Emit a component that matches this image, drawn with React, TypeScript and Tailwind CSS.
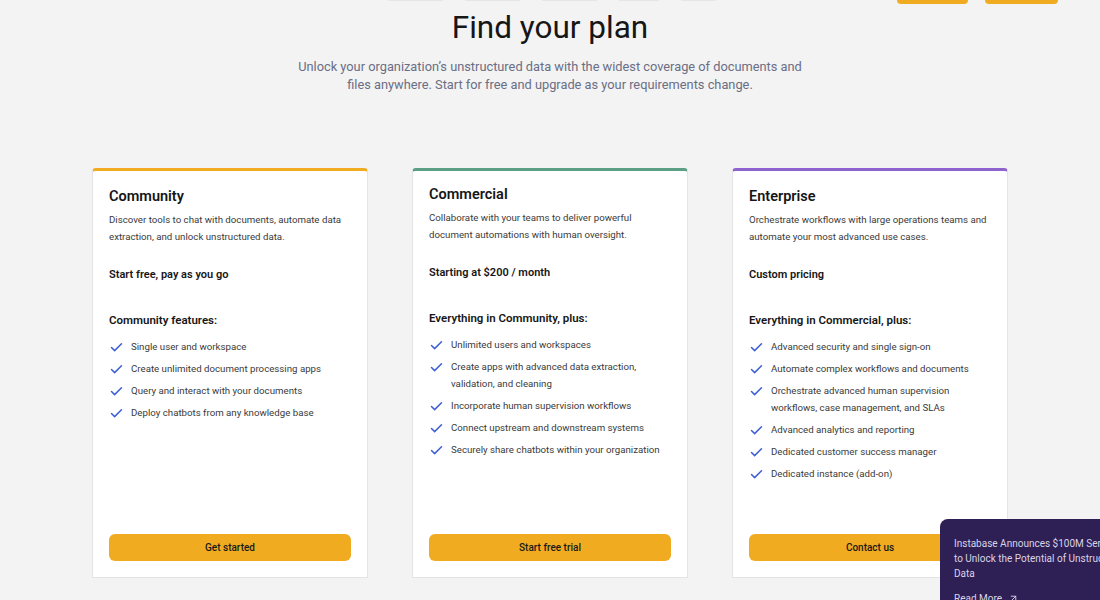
import { Check, ArrowUpRight } from "lucide-react";

type Plan = {
  name: string;
  desc: string[];
  price: string;
  heading: string;
  features: string[][];
  cta: string;
  accent: string;
  shift: string;
};

const plans: Plan[] = [
  {
    name: "Community",
    desc: ["Discover tools to chat with documents, automate data", "extraction, and unlock unstructured data."],
    price: "Start free, pay as you go",
    heading: "Community features:",
    features: [
      ["Single user and workspace"],
      ["Create unlimited document processing apps"],
      ["Query and interact with your documents"],
      ["Deploy chatbots from any knowledge base"],
    ],
    cta: "Get started",
    accent: "border-t-[#f0ab20]",
    shift: "pt-[17px]",
  },
  {
    name: "Commercial",
    desc: ["Collaborate with your teams to deliver powerful", "document automations with human oversight."],
    price: "Starting at $200 / month",
    heading: "Everything in Community, plus:",
    features: [
      ["Unlimited users and workspaces"],
      ["Create apps with advanced data extraction,", "validation, and cleaning"],
      ["Incorporate human supervision workflows"],
      ["Connect upstream and downstream systems"],
      ["Securely share chatbots within your organization"],
    ],
    cta: "Start free trial",
    accent: "border-t-[#5a9e86]",
    shift: "pt-[15px]",
  },
  {
    name: "Enterprise",
    desc: ["Orchestrate workflows with large operations teams and", "automate your most advanced use cases."],
    price: "Custom pricing",
    heading: "Everything in Commercial, plus:",
    features: [
      ["Advanced security and single sign-on"],
      ["Automate complex workflows and documents"],
      ["Orchestrate advanced human supervision", "workflows, case management, and SLAs"],
      ["Advanced analytics and reporting"],
      ["Dedicated customer success manager"],
      ["Dedicated instance (add-on)"],
    ],
    cta: "Contact us",
    accent: "border-t-[#8e63ce]",
    shift: "pt-[17px]",
  },
];

function PlanCard({ plan }: { plan: Plan }) {
  return (
    <div
      className={`flex w-[276px] flex-col rounded-t-[4px] border border-[#e4e4e4] border-t-[3px] bg-white px-4 pb-4 ${plan.accent} ${plan.shift}`}
    >
      <h3 className="text-[14.5px] font-semibold leading-[18px] text-[#161616]">{plan.name}</h3>
      <p className="mt-[5px] whitespace-nowrap text-[9.7px] leading-[17px] text-[#3a3a3a]">
        {plan.desc[0]}
        <br />
        {plan.desc[1]}
      </p>
      <p className="mt-[23px] text-[11px] font-semibold leading-[14px] text-[#161616]">{plan.price}</p>
      <p className="mt-[31px] text-[11.5px] font-semibold leading-[14px] text-[#161616]">{plan.heading}</p>
      <ul className="mt-[11px] flex flex-col gap-[5px]">
        {plan.features.map((f) => (
          <li key={f[0]} className="flex items-start gap-[7px]">
            <Check className="mt-[2px] h-[15px] w-[15px] shrink-0 text-[#3d5fd6]" strokeWidth={2.4} />
            <span className="whitespace-nowrap text-[9.7px] leading-[17px] text-[#3a3a3a]">
              {f[0]}
              {f[1] && (
                <>
                  <br />
                  {f[1]}
                </>
              )}
            </span>
          </li>
        ))}
      </ul>
      <button className="mt-auto h-[27px] w-full rounded-[6px] bg-[#f0ab20] text-[10px] font-medium text-[#1a1a1a]">
        {plan.cta}
      </button>
    </div>
  );
}

export default function App() {
  return (
    <div
      className="relative h-[600px] w-[1100px] overflow-hidden bg-[#f3f3f3]"
      style={{ fontFamily: "Roboto, 'Noto Sans', sans-serif" }}
    >
      {/* top nav remnants */}
      <div className="flex h-[4px] items-start">
        <div className="ml-[388px] flex gap-[22px]">
          <span className="h-[1px] w-[55px] bg-[#e6e6e6]" />
          <span className="h-[1px] w-[55px] bg-[#e6e6e6]" />
          <span className="h-[1px] w-[55px] bg-[#e6e6e6]" />
          <span className="h-[1px] w-[40px] bg-[#e6e6e6]" />
          <span className="h-[1px] w-[35px] bg-[#e6e6e6]" />
        </div>
        <div className="ml-auto mr-[42px] flex gap-[17px]">
          <span className="h-[4px] w-[71px] rounded-b-[4px] bg-[#f0ab20]" />
          <span className="h-[4px] w-[73px] rounded-b-[4px] bg-[#f0ab20]" />
        </div>
      </div>

      <div className="flex flex-col items-center">
        <h1 className="mt-[6px] text-[31.5px] leading-[36px] font-normal text-[#161616]">Find your plan</h1>
        <p className="mt-[12px] text-center text-[12.8px] leading-[18px] text-[#6a6e85]">
          Unlock your organization’s unstructured data with the widest coverage of documents and
          <br />
          files anywhere. Start for free and upgrade as your requirements change.
        </p>
      </div>

      <div className="mt-[74px] flex h-[410px] items-stretch gap-[44px] pl-[92px]">
        {plans.map((p) => (
          <PlanCard key={p.name} plan={p} />
        ))}
      </div>

      {/* news popup */}
      <div className="absolute left-[940px] top-[519px] h-[100px] w-[180px] rounded-tl-[8px] bg-[#2e1f55] px-[14px] pt-[17px] text-[10px] leading-[15px] text-[#d9d4e6]">
        <p className="whitespace-nowrap">
          Instabase Announces $100M Series
          <br />
          to Unlock the Potential of Unstructured
          <br />
          Data
        </p>
        <p className="mt-[10px] flex items-center gap-[6px]">
          Read More <ArrowUpRight className="h-[11px] w-[11px]" />
        </p>
      </div>
    </div>
  );
}
